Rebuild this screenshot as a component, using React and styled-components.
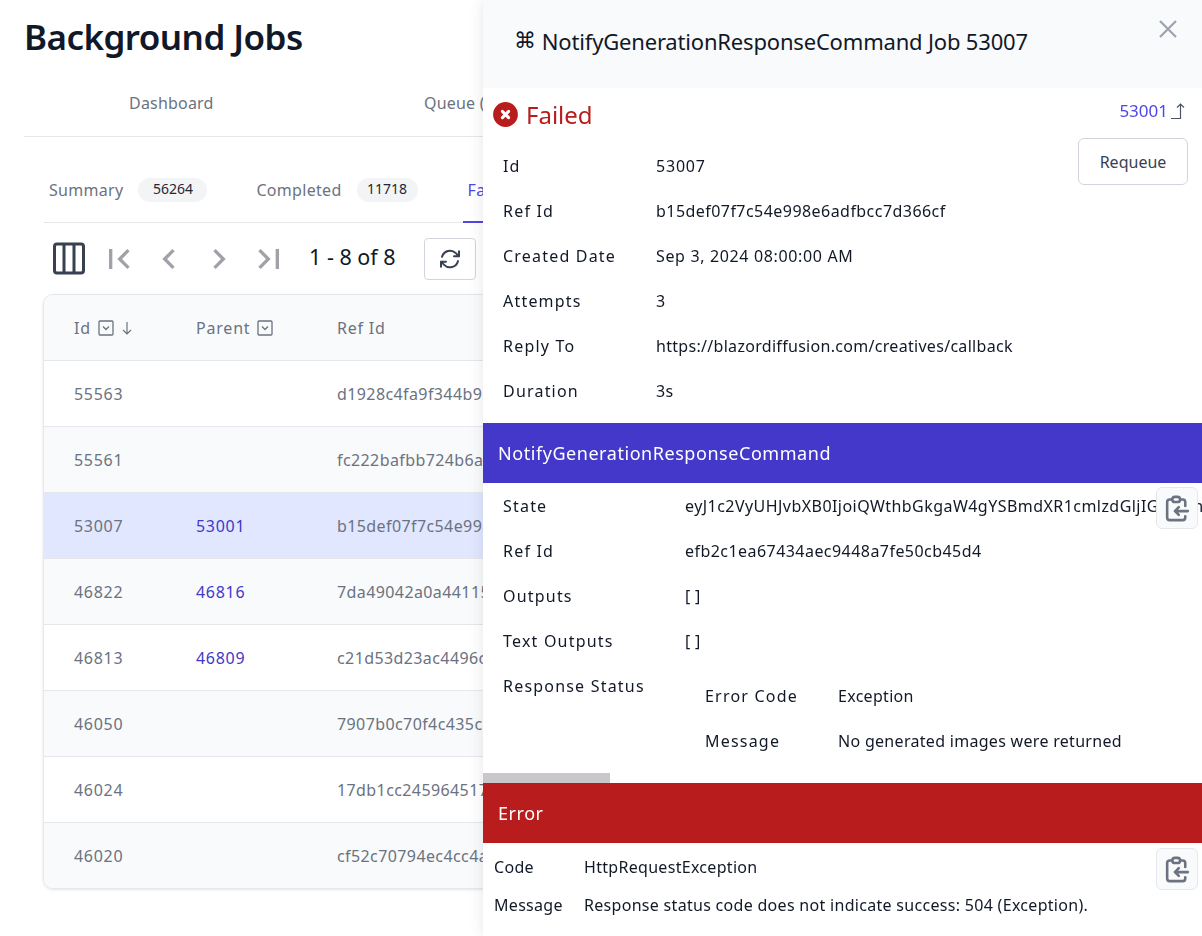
import React from "react";
import styled, { createGlobalStyle } from "styled-components";
import { MdFirstPage, MdLastPage, MdChevronLeft, MdChevronRight } from "react-icons/md";
import { HiXCircle, HiOutlineClipboardCopy } from "react-icons/hi";
import { HiOutlineArrowPath } from "react-icons/hi2";

const GlobalStyle = createGlobalStyle`
  html, body {
    margin: 0;
    padding: 0;
    height: 936px;
    overflow: hidden;
    background: #ffffff;
    font-family: "Noto Sans", "Open Sans", sans-serif;
  }
  * { box-sizing: border-box; }
`;

const jobs = [
  { id: "55563", parent: "", ref: "d1928c4fa9f344b95e0c1d7a" },
  { id: "55561", parent: "", ref: "fc222bafbb724b6a8d3e90c1" },
  { id: "53007", parent: "53001", ref: "b15def07f7c54e998e6adfbcc7d366cf", selected: true },
  { id: "46822", parent: "46816", ref: "7da49042a0a44115b2c7e6d0" },
  { id: "46813", parent: "46809", ref: "c21d53d23ac4496c90ab13f7" },
  { id: "46050", parent: "", ref: "7907b0c70f4c435c8e12fa64" },
  { id: "46024", parent: "", ref: "17db1cc2459645179ac03be2" },
  { id: "46020", parent: "", ref: "cf52c70794ec4cc4a1d86b37" },
];

const Page = styled.div`
  width: 1202px;
  height: 936px;
  overflow: hidden;
  padding: 0 0 0 24px;
`;

const Title = styled.h1`
  margin: 0;
  height: 74px;
  font-size: 35px;
  line-height: 74px;
  font-weight: 600;
  letter-spacing: -0.55px;
  color: #111827;
`;

const MainNav = styled.nav`
  display: flex;
  height: 63px;
  border-bottom: 1px solid #e5e7eb;
  padding-left: 105px;
  align-items: center;
  font-size: 16px;
  letter-spacing: 0.2px;
  color: #6b7280;
  padding-bottom: 4px;
`;

const MainNavItem = styled.span`
  width: 295px;
  white-space: nowrap;
`;

const Content = styled.div`
  padding-left: 19px;
`;

const Tabs = styled.div`
  display: flex;
  height: 86px;
  margin-left: 1px;
  border-bottom: 1px solid #e5e7eb;
  padding: 41px 0 0 5px;
`;

const Tab = styled.div`
  display: flex;
  align-items: flex-start;
  gap: 15px;
  margin-right: 49px;
  font-size: 16px;
  line-height: 24px;
  letter-spacing: 0.3px;
  color: ${(p) => (p.$active ? "#4f46e5" : "#6b7280")};
  white-space: nowrap;
  ${(p) => p.$active && "height: 45px; padding: 0 5px; margin-left: -4px; border-bottom: 2px solid #4f46e5;"}
`;

const Badge = styled.span`
  display: block;
  width: ${(p) => p.$w}px;
  height: 24px;
  border-radius: 12px;
  background: #f3f4f6;
  color: #1f2937;
  font-size: 14px;
  line-height: 22px;
  letter-spacing: 0;
  text-align: center;
`;

const Toolbar = styled.div`
  display: flex;
  align-items: center;
  height: 71px;
  padding: 0 0 0 9px;
  color: #9ca3af;
`;

const IconSlot = styled.span`
  display: flex;
  align-items: center;
  justify-content: center;
  width: 50px;
  margin-left: ${(p) => p.$ml || 0}px;
  font-size: 40px;
  color: #a1a1aa;
`;

const PageInfo = styled.span`
  margin: -4px 0 0 15px;
  width: 115px;
  font-size: 21.5px;
  color: #111827;
  white-space: nowrap;
`;

const RefreshButton = styled.button`
  display: flex;
  align-items: center;
  justify-content: center;
  width: 52px;
  height: 42px;
  padding: 0;
  background: #fff;
  border: 1px solid #d1d5db;
  border-radius: 4px;
  color: #374151;
  font-size: 24px;
  svg { stroke-width: 2; }
`;

const TableCard = styled.div`
  width: 700px;
  border: 1px solid #e5e7eb;
  border-radius: 10px;
  overflow: hidden;
  box-shadow: 0 1px 3px rgba(0, 0, 0, 0.1);
`;

const HeadRow = styled.div`
  display: grid;
  grid-template-columns: 122px 141px 1fr;
  align-items: center;
  height: 65px;
  padding-left: 30px;
  background: #f9fafb;
  font-size: 16px;
  letter-spacing: 0.8px;
  color: #6b7280;
`;

const HeadCell = styled.span`
  display: flex;
  align-items: center;
  gap: 7px;
`;

const Row = styled.div`
  display: grid;
  grid-template-columns: 122px 141px 1fr;
  align-items: center;
  height: 66px;
  padding-left: 30px;
  border-top: 1px solid #e5e7eb;
  font-size: 16px;
  letter-spacing: 0.7px;
  color: #6b7280;
  white-space: nowrap;
  background: ${(p) => (p.$selected ? "#e0e7ff" : p.$even ? "#f9fafb" : "#ffffff")};
`;

const ParentLink = styled.a`
  color: #4338ca;
`;

const RefCell = styled.span`
  letter-spacing: 0.4px;
`;

const Drawer = styled.aside`
  position: fixed;
  top: 0;
  right: 0;
  bottom: 0;
  width: 719px;
  background: #ffffff;
  overflow: hidden;
  box-shadow: 0 0 14px rgba(0, 0, 0, 0.1);
`;

const DrawerHeader = styled.header`
  display: flex;
  align-items: center;
  height: 88px;
  padding: 0 0 7px 31px;
  background: #f9fafb;
  font-size: 22px;
  letter-spacing: -0.18px;
  color: #111827;
  white-space: nowrap;
`;

const CommandGlyph = styled.span`
  font-family: "DejaVu Sans", sans-serif;
  margin-right: 6px;
`;

const CloseIcon = styled.svg`
  position: absolute;
  top: 19px;
  right: 24px;
  width: 20px;
  height: 20px;
  stroke: #9ca3af;
  stroke-width: 2.2;
  fill: none;
`;

const StatusRow = styled.div`
  display: flex;
  align-items: center;
  height: 55px;
  padding: 0 17px 2px 7px;
  color: #b91c1c;
  font-size: 24px;
`;

const StatusIcon = styled.span`
  display: flex;
  font-size: 31px;
  margin-right: 5px;
`;

const ParentJump = styled.a`
  display: flex;
  align-items: center;
  gap: 2px;
  margin: -8px 0 0 auto;
  color: #4f46e5;
  font-size: 17px;
`;

const RequeueButton = styled.button`
  position: absolute;
  top: 138px;
  right: 14px;
  width: 110px;
  height: 47px;
  background: #fff;
  border: 1px solid #d1d5db;
  border-radius: 6px;
  font: inherit;
  font-size: 16px;
  color: #374151;
`;

const Fields = styled.div`
  padding: 0 0 0 20px;
`;

const Field = styled.div`
  display: grid;
  grid-template-columns: ${(p) => p.$cols};
  align-items: ${(p) => (p.$top ? "start" : "center")};
  height: ${(p) => p.$h || "45px"};
  font-size: 16px;
  color: #111827;
  white-space: nowrap;
`;

const Label = styled.span`
  letter-spacing: 1.2px;
  ${(p) => p.$top && "padding-top: 12px;"}
`;

const Value = styled.span`
  letter-spacing: ${(p) => p.$ls ?? 0.3}px;
`;

const Nested = styled.div`
  padding: 10px 0 0 20px;
`;

const Band = styled.div`
  display: flex;
  align-items: center;
  height: 60px;
  margin-top: ${(p) => p.$mt || 0}px;
  padding-left: 15px;
  background: ${(p) => p.$bg};
  font-size: 18px;
  letter-spacing: 0.55px;
  color: #ffffff;
`;

const ScrollThumb = styled.div`
  width: 127px;
  height: 10px;
  margin-top: 10px;
  background: #c9c7c9;
`;

const CopyButton = styled.button`
  position: absolute;
  top: ${(p) => p.$top}px;
  right: 4px;
  display: flex;
  align-items: center;
  justify-content: center;
  width: 42px;
  height: 42px;
  padding: 0;
  background: #f9fafb;
  border: 1px solid #e5e7eb;
  border-radius: 6px;
  font-size: 31px;
  color: #6b7280;
`;

const ErrorFields = styled.div`
  padding: 5px 0 0 11px;
`;

const ErrorField = styled.div`
  display: grid;
  grid-template-columns: 90px 1fr;
  align-items: center;
  height: 38px;
  font-size: 16px;
  letter-spacing: 0.3px;
  color: #111827;
  white-space: nowrap;
`;

const ColumnsIcon = () => (
  <svg width="36" height="36" viewBox="0 0 36 36" fill="none" stroke="#374151" strokeWidth="3">
    <rect x="2.5" y="3" width="29" height="29" rx="2.5" />
    <path d="M12 3v29M22 3v29" />
  </svg>
);

const FilterIcon = () => (
  <svg width="16" height="16" viewBox="0 0 16 16" fill="none" stroke="#6b7280" strokeWidth="1.3">
    <rect x="1" y="1" width="14" height="14" rx="1" />
    <path d="M5 6.5 8 9.5 11 6.5" />
  </svg>
);

const SortIcon = () => (
  <svg width="12" height="16" viewBox="0 0 12 16" fill="none" stroke="#6b7280" strokeWidth="1.2">
    <path d="M6 2v12M2 10l4 4 4-4" />
  </svg>
);

const UpIcon = () => (
  <svg width="15" height="18" viewBox="0 0 15 18" fill="none" stroke="#4b5563" strokeWidth="1.2">
    <path d="M1 16.5h9.5V2M7 5.5l3.5-3.5 3.5 3.5" />
  </svg>
);

const App = () => (
  <Page>
    <GlobalStyle />
    <Title>Background Jobs</Title>
    <MainNav>
      <MainNavItem>Dashboard</MainNavItem>
      <MainNavItem>Queue (0)</MainNavItem>
    </MainNav>
    <Content>
      <Tabs>
        <Tab>Summary<Badge $w={69}>56264</Badge></Tab>
        <Tab>Completed<Badge $w={61}>11718</Badge></Tab>
        <Tab $active>Failed<Badge $w={40}>8</Badge></Tab>
      </Tabs>
      <Toolbar>
        <ColumnsIcon />
        <IconSlot $ml={6}><MdFirstPage /></IconSlot>
        <IconSlot><MdChevronLeft /></IconSlot>
        <IconSlot><MdChevronRight /></IconSlot>
        <IconSlot><MdLastPage /></IconSlot>
        <PageInfo>1 - 8 of 8</PageInfo>
        <RefreshButton><HiOutlineArrowPath /></RefreshButton>
      </Toolbar>
      <TableCard>
        <HeadRow>
          <HeadCell>Id <FilterIcon /> <SortIcon /></HeadCell>
          <HeadCell>Parent <FilterIcon /></HeadCell>
          <HeadCell>Ref Id</HeadCell>
        </HeadRow>
        {jobs.map((job, i) => (
          <Row key={job.id} $selected={job.selected} $even={i % 2 === 1}>
            <span>{job.id}</span>
            <ParentLink>{job.parent}</ParentLink>
            <RefCell>{job.ref}</RefCell>
          </Row>
        ))}
      </TableCard>
    </Content>

    <Drawer>
      <DrawerHeader>
        <CommandGlyph>⌘</CommandGlyph>
        NotifyGenerationResponseCommand Job 53007
      </DrawerHeader>
      <CloseIcon viewBox="0 0 20 20"><path d="M2 2l16 16M18 2 2 18" /></CloseIcon>
      <StatusRow>
        <StatusIcon><HiXCircle /></StatusIcon>
        Failed
        <ParentJump>53001<UpIcon /></ParentJump>
      </StatusRow>
      <RequeueButton>Requeue</RequeueButton>
      <Fields>
        <Field $cols="153px 1fr"><Label>Id</Label><Value $ls={0.8}>53007</Value></Field>
        <Field $cols="153px 1fr"><Label>Ref Id</Label><Value $ls={0.45}>b15def07f7c54e998e6adfbcc7d366cf</Value></Field>
        <Field $cols="153px 1fr"><Label>Created Date</Label><Value $ls={0.65}>Sep 3, 2024 08:00:00 AM</Value></Field>
        <Field $cols="153px 1fr"><Label>Attempts</Label><Value>3</Value></Field>
        <Field $cols="153px 1fr"><Label>Reply To</Label><Value>https://blazordiffusion.com/creatives/callback</Value></Field>
        <Field $cols="153px 1fr"><Label>Duration</Label><Value>3s</Value></Field>
      </Fields>
      <Band $mt={10} $bg="#4338ca">NotifyGenerationResponseCommand</Band>
      <Fields>
        <Field $cols="182px 1fr">
          <Label>State</Label>
          <Value $ls={0.45}>eyJ1c2VyUHJvbXB0IjoiQWthbGkgaW4gYSBmdXR1cmlzdGljIGNvcm5lciBpbiBhIHNwYWNl</Value>
        </Field>
        <Field $cols="182px 1fr"><Label>Ref Id</Label><Value $ls={0.45}>efb2c1ea67434aec9448a7fe50cb45d4</Value></Field>
        <Field $cols="182px 1fr"><Label>Outputs</Label><Value>[ ]</Value></Field>
        <Field $cols="182px 1fr"><Label>Text Outputs</Label><Value>[ ]</Value></Field>
        <Field $cols="182px 1fr" $top $h="100px">
          <Label $top>Response Status</Label>
          <Nested>
            <Field $cols="133px 1fr"><Label>Error Code</Label><Value>Exception</Value></Field>
            <Field $cols="133px 1fr"><Label>Message</Label><Value>No generated images were returned</Value></Field>
          </Nested>
        </Field>
      </Fields>
      <ScrollThumb />
      <Band $bg="#b91c1c">Error</Band>
      <ErrorFields>
        <ErrorField><span>Code</span><span>HttpRequestException</span></ErrorField>
        <ErrorField><span>Message</span><span>Response status code does not indicate success: 504 (Exception).</span></ErrorField>
      </ErrorFields>
      <CopyButton $top={487}><HiOutlineClipboardCopy /></CopyButton>
      <CopyButton $top={848}><HiOutlineClipboardCopy /></CopyButton>
    </Drawer>
  </Page>
);

export default App;
